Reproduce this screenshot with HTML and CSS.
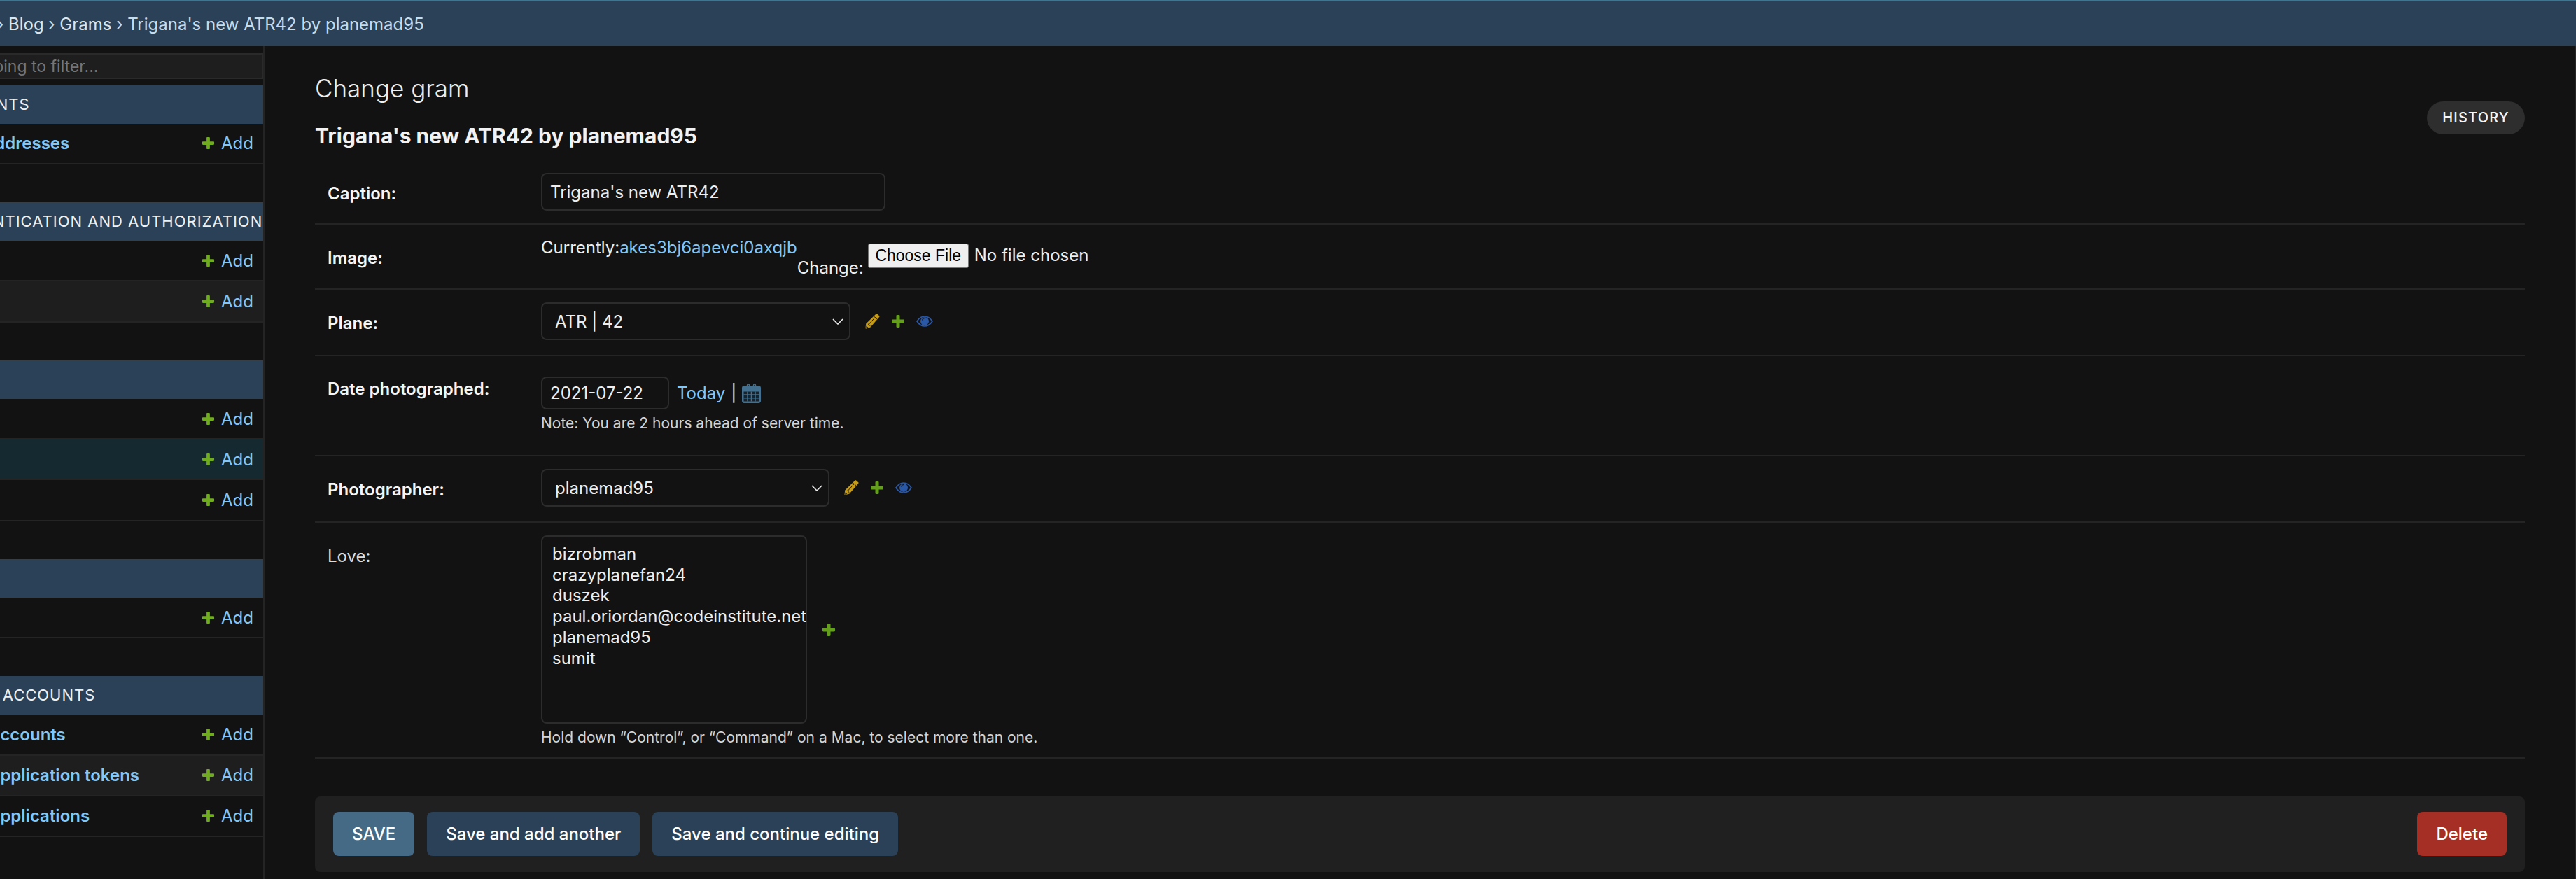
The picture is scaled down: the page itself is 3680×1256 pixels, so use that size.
FILE: index.html
```html
<!DOCTYPE html>
<html lang="en">
  <head>
    <meta charset="UTF-8" />
    <title>Change gram | Django site admin</title>
    <link rel="stylesheet" href="styles.css">
  </head>
  <body>
    <!-- Shared icons -->
    <svg class="sprite" xmlns="http://www.w3.org/2000/svg">
      <symbol id="icon-plus" viewBox="0 0 20 20">
        <path d="M7.5 2.2C7.5 1.5 8 1 8.7 1h2.6c.7 0 1.2.5 1.2 1.2v5.3h5.3c.7 0 1.2.5 1.2 1.2v2.6c0 .7-.5 1.2-1.2 1.2h-5.3v5.3c0 .7-.5 1.2-1.2 1.2H8.7c-.7 0-1.2-.5-1.2-1.2v-5.3H2.2c-.7 0-1.2-.5-1.2-1.2V8.7c0-.7.5-1.2 1.2-1.2h5.3z" fill="currentColor"/>
      </symbol>
      <symbol id="icon-pencil" viewBox="0 0 21 22">
        <path d="M15.6.6c.5-.4 1.1-.4 1.5 0l3.1 2.7c.5.4.5 1 .1 1.5L7.6 19.6 1.4 21.6c-.6.2-1-.2-.9-.8l.7-6.2z" fill="currentColor"/>
        <path d="M13.3 4.6l3.8 3.2M4 14.8l3.4 3M5 15.6l9.4-10.3" stroke="#121212" stroke-width="1" fill="none"/>
        <path d="M1.6 17.4l2.8 2.5-3 1z" fill="#121212"/>
      </symbol>
      <symbol id="icon-eye" viewBox="0 0 24 16">
        <path d="M1 8c3-4.600 6.800-7 11-7s8 2.400 11 7c-3 4.600-6.800 7-11 7S4 12.600 1 8z" fill="none" stroke="currentColor" stroke-width="1.700"/>
        <circle cx="12" cy="8" r="6" fill="currentColor"/>
        <path d="M8.500 6.500c.4-1.700 1.600-2.800 3.400-3.100" fill="none" stroke="#121212" stroke-width="1.200"/>
      </symbol>
      <symbol id="icon-chevron" viewBox="0 0 16 9">
        <path d="M1 1l7 7 7-7" fill="none" stroke="currentColor" stroke-width="1.600"/>
      </symbol>
      <symbol id="icon-calendar" viewBox="0 0 27 28">
        <path d="M3 3h21c1.600 0 3 1.400 3 3v19c0 1.600-1.400 3-3 3H3c-1.600 0-3-1.400-3-3V6c0-1.600 1.400-3 3-3z" fill="currentColor"/>
        <path d="M7.500 6V2.500c0-2 3-2 3 0V6M16.500 6V2.500c0-2 3-2 3 0V6" fill="none" stroke="currentColor" stroke-width="1.500"/>
        <path d="M2.500 11.500h22v14h-22z" fill="#18222b"/>
        <path d="M2.500 16h22M2.500 20.800h22M8 11.500v14M13.500 11.500v14M19 11.500v14" stroke="currentColor" stroke-width="1.500"/>
      </symbol>
    </svg>

    <header class="topbar">
      <nav class="breadcrumbs">
        <a href="#">Home</a> › <a href="#">Blog</a> › <a href="#">Grams</a> › Trigana's new ATR42 by planemad95
      </nav>
    </header>

    <div class="page">
      <aside class="sidebar">
        <div class="nav">
          <div class="nav-filter">
            <input class="filter-input" type="text" placeholder="Start typing to filter...">
          </div>

          <section class="app">
            <h3 class="app-name">Accounts</h3>
            <div class="model-row"><a href="#">Email addresses</a><a class="add-link" href="#"><svg><use href="#icon-plus"/></svg>Add</a></div>
          </section>

          <section class="app">
            <h3 class="app-name">Authentication and Authorization</h3>
            <div class="model-row"><a href="#">Groups</a><a class="add-link" href="#"><svg><use href="#icon-plus"/></svg>Add</a></div>
            <div class="model-row alt"><a href="#">Users</a><a class="add-link" href="#"><svg><use href="#icon-plus"/></svg>Add</a></div>
          </section>

          <section class="app">
            <h3 class="app-name">Blog</h3>
            <div class="model-row"><a href="#">Airlines</a><a class="add-link" href="#"><svg><use href="#icon-plus"/></svg>Add</a></div>
            <div class="model-row current"><a href="#">Grams</a><a class="add-link" href="#"><svg><use href="#icon-plus"/></svg>Add</a></div>
            <div class="model-row"><a href="#">Planes</a><a class="add-link" href="#"><svg><use href="#icon-plus"/></svg>Add</a></div>
          </section>

          <section class="app">
            <h3 class="app-name">Sites</h3>
            <div class="model-row"><a href="#">Sites</a><a class="add-link" href="#"><svg><use href="#icon-plus"/></svg>Add</a></div>
          </section>

          <section class="app">
            <h3 class="app-name">Social Accounts</h3>
            <div class="model-row"><a href="#">Social accounts</a><a class="add-link" href="#"><svg><use href="#icon-plus"/></svg>Add</a></div>
            <div class="model-row alt"><a href="#">Social application tokens</a><a class="add-link" href="#"><svg><use href="#icon-plus"/></svg>Add</a></div>
            <div class="model-row"><a href="#">Social applications</a><a class="add-link" href="#"><svg><use href="#icon-plus"/></svg>Add</a></div>
          </section>
        </div>
      </aside>

      <main class="content">
        <div class="content-head">
          <div>
            <h1 class="page-title">Change gram</h1>
            <h2 class="object-title">Trigana's new ATR42 by planemad95</h2>
          </div>
          <a class="history-btn" href="#">History</a>
        </div>

        <form>
          <div class="form-row">
            <label class="field-label required">Caption:</label>
            <input class="text-input caption-input" type="text" value="Trigana's new ATR42">
          </div>

          <div class="form-row image-row">
            <label class="field-label required">Image:</label>
            <div class="file-upload">
              <span class="file-current">Currently:<a href="#">akes3bj6apevci0axqjb</a></span>
              <span class="file-change">Change:</span>
              <input class="file-input" type="file">
            </div>
          </div>

          <div class="form-row related-row">
            <label class="field-label required">Plane:</label>
            <div class="select-box plane-select">ATR | 42<svg class="chevron"><use href="#icon-chevron"/></svg></div>
            <div class="related-links">
              <svg class="icon-pencil"><use href="#icon-pencil"/></svg>
              <svg class="icon-plus"><use href="#icon-plus"/></svg>
              <svg class="icon-eye"><use href="#icon-eye"/></svg>
            </div>
          </div>

          <div class="form-row date-row">
            <label class="field-label required">Date photographed:</label>
            <div>
              <div class="date-line">
                <input class="text-input date-input" type="text" value="2021-07-22">
                <a class="today-link" href="#">Today</a>
                <span class="date-sep">|</span>
                <svg class="icon-calendar"><use href="#icon-calendar"/></svg>
              </div>
              <p class="help">Note: You are 2 hours ahead of server time.</p>
            </div>
          </div>

          <div class="form-row related-row">
            <label class="field-label required">Photographer:</label>
            <div class="select-box user-select">planemad95<svg class="chevron"><use href="#icon-chevron"/></svg></div>
            <div class="related-links">
              <svg class="icon-pencil"><use href="#icon-pencil"/></svg>
              <svg class="icon-plus"><use href="#icon-plus"/></svg>
              <svg class="icon-eye"><use href="#icon-eye"/></svg>
            </div>
          </div>

          <div class="form-row love-row">
            <label class="field-label">Love:</label>
            <div>
              <div class="love-line">
                <ul class="multi-select">
                  <li>bizrobman</li>
                  <li>crazyplanefan24</li>
                  <li>duszek</li>
                  <li>paul.oriordan@codeinstitute.net</li>
                  <li>planemad95</li>
                  <li>sumit</li>
                </ul>
                <svg class="icon-plus"><use href="#icon-plus"/></svg>
              </div>
              <p class="help">Hold down “Control”, or “Command” on a Mac, to select more than one.</p>
            </div>
          </div>

          <div class="submit-row">
            <button class="btn btn-default" type="button">Save</button>
            <button class="btn" type="button">Save and add another</button>
            <button class="btn" type="button">Save and continue editing</button>
            <a class="btn btn-delete" href="#">Delete</a>
          </div>
        </form>
      </main>
    </div>
  </body>
</html>
```

FILE: styles.css
```css
html, body {
  margin: 0;
  height: 1256px;
  overflow: hidden;
  background: #121212;
  color: #eeeeee;
  font-family: 'Inter', 'Liberation Sans', sans-serif;
  font-size: 24px;
}

a {
  color: #81c8f8;
  text-decoration: none;
}

.sprite {
  display: none;
}

/* Top bar */
.topbar {
  height: 64px;
  background: #2b4157;
  border-top: 2px solid #417690;
  display: flex;
  align-items: center;
  overflow: hidden;
}

.breadcrumbs {
  margin-left: -78px;
  white-space: nowrap;
  font-size: 24px;
  color: #c5dcec;
}

.breadcrumbs a {
  color: #dbe5ec;
}

.page {
  display: flex;
  height: 1190px;
  border-right: 2px solid #262626;
}

/* Sidebar */
.sidebar {
  width: 376px;
  flex: none;
  overflow: hidden;
  border-right: 2px solid #242424;
}

.nav {
  width: 600px;
  margin-left: -224px;
}

.nav-filter {
  padding: 10px 0 9px;
}

.filter-input {
  display: block;
  box-sizing: border-box;
  width: 100%;
  height: 37px;
  padding: 0 0 0 134px;
  background: #1e1e1e;
  border: 2px solid #2a2a2a;
  color: #eeeeee;
  font-family: inherit;
  font-size: 23px;
}

.filter-input::placeholder {
  color: #757575;
}

.app {
  margin-bottom: 54.3px;
}

.app-name {
  margin: 0;
  height: 54.8px;
  padding-left: 134px;
  background: #2b4157;
  color: #f0f0f0;
  font-size: 22px;
  font-weight: 400;
  line-height: 54.8px;
  letter-spacing: 1px;
  text-transform: uppercase;
}

.model-row {
  box-sizing: border-box;
  height: 58.3px;
  padding: 0 14px 0 134px;
  display: flex;
  align-items: center;
  justify-content: space-between;
  border-bottom: 2px solid #242424;
  font-size: 24px;
  font-weight: 600;
}

.model-row.alt {
  background: #1e1e1e;
}

.model-row.current {
  background: #152a30;
}

.add-link {
  display: flex;
  align-items: center;
  gap: 9px;
  font-weight: 400;
}

.add-link svg {
  width: 19px;
  height: 19px;
  color: #70ad1e;
}

/* Main content */
.content {
  flex: 1;
  padding: 0 71px 0 72px;
  min-width: 0;
}

.content-head {
  display: flex;
  justify-content: space-between;
  align-items: flex-start;
  height: 163px;
}

.page-title {
  margin: 37px 0 0;
  font-size: 35px;
  font-weight: 300;
  line-height: 46px;
  color: #eeeeee;
}

.object-title {
  margin: 27px 0 0;
  font-size: 30px;
  font-weight: 700;
  line-height: 36px;
  color: #f2f2f2;
}

.history-btn {
  margin-top: 79px;
  height: 47px;
  padding: 0 22px;
  border-radius: 24px;
  background: #2e2e2e;
  color: #f5f5f5;
  font-size: 20px;
  font-weight: 500;
  line-height: 47px;
  letter-spacing: 1.200px;
  text-transform: uppercase;
}

.form-row {
  display: flex;
  padding: 18px 0 18px 18px;
  border-bottom: 2px solid #242424;
}

.related-row {
  padding-bottom: 21px;
}

.image-row {
  padding-bottom: 14px;
}

.date-row {
  padding: 29px 0 30px 18px;
}

.love-row {
  padding-bottom: 13px;
}

.field-label {
  flex: none;
  width: 305px;
  padding-top: 15px;
  font-weight: 600;
  line-height: 30px;
  color: #f5f5f5;
}

.date-row .field-label {
  padding-top: 3px;
}

.love-row .field-label {
  font-weight: 400;
  color: #dddddd;
}

.text-input,
.select-box,
.multi-select {
  box-sizing: border-box;
  background: #121212;
  border: 2px solid #2c2c2c;
  border-radius: 8px;
  color: #eeeeee;
  font-family: inherit;
  font-size: 24px;
}

.text-input {
  height: 54px;
  padding: 0 11px;
}

.caption-input {
  width: 492px;
}

.date-input {
  width: 183px;
  height: 47px;
}

.select-box {
  height: 54px;
  padding: 0 8px 0 18px;
  display: flex;
  align-items: center;
  justify-content: space-between;
}

.plane-select {
  width: 442px;
}

.user-select {
  width: 412px;
}

.chevron {
  width: 16px;
  height: 9px;
  color: #eeeeee;
}

.related-links {
  display: flex;
  align-items: center;
  height: 54px;
  margin-left: 21px;
  gap: 16px;
}

.icon-pencil {
  width: 21px;
  height: 22px;
  color: #c49a17;
}

.icon-plus {
  width: 20px;
  height: 20px;
  color: #649f1c;
}

.icon-eye {
  width: 24px;
  height: 16px;
  color: #2a58a8;
}

.file-upload {
  display: flex;
  height: 59px;
}

.file-current {
  line-height: 30px;
}

.file-change {
  align-self: flex-end;
  line-height: 30px;
  margin-right: 6px;
}

.file-input {
  align-self: flex-start;
  margin-top: 9px;
  color: #eeeeee;
  font-family: inherit;
  font-size: 24px;
}

.file-input::file-selector-button {
  height: 35px;
  width: 144px;
  margin-right: 8px;
  padding: 0;
  background: #efefef;
  border: 1px solid #767676;
  border-radius: 3px;
  color: #000000;
  font-family: 'Liberation Sans', sans-serif;
  font-size: 23px;
}

.date-line {
  display: flex;
  align-items: center;
  height: 47px;
}

.today-link {
  margin-left: 11px;
}

.date-sep {
  margin: 0 8px;
}

.icon-calendar {
  width: 27px;
  height: 28px;
  color: #44708f;
}

.help {
  margin: 5px 0 0;
  font-size: 21px;
  line-height: 30px;
  color: #d4d4d4;
}

.love-line {
  display: flex;
  align-items: center;
  gap: 21px;
}

.multi-select {
  width: 380px;
  height: 269px;
  margin: 0;
  padding: 10px 14px;
  list-style: none;
}

.multi-select li {
  line-height: 29.700px;
  white-space: nowrap;
}

/* Submit row */
.submit-row {
  display: flex;
  gap: 18px;
  margin-top: 54px;
  padding: 22px 26px 23px;
  background: #202020;
  border-radius: 8px;
}

.btn {
  box-sizing: border-box;
  height: 63px;
  padding: 0 27px;
  background: #2b4157;
  border: 0;
  border-radius: 8px;
  color: #ffffff;
  font-family: inherit;
  font-size: 24px;
  font-weight: 500;
  line-height: 63px;
}

.btn-default {
  background: #446a86;
  text-transform: uppercase;
}

.btn-delete {
  margin-left: auto;
  background: #a52f24;
}
```
